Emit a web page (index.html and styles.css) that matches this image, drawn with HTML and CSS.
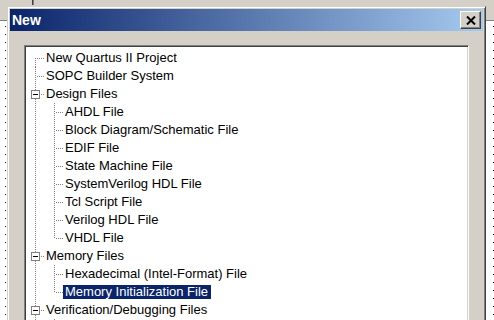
FILE: index.html
```html
<!DOCTYPE html>
<html lang="en">

<head>
    <meta charset="utf-8" />
    <title>New</title>
    <link rel="stylesheet" href="styles.css">
</head>

<body>
    <div class="desktop">
        <div class="topbar"><span class="edge"></span></div>

        <div class="dialog">
            <div class="titlebar">
                <span class="title">New</span>
                <button class="close">
                    <svg width="10" height="9" viewBox="0 0 10 9">
                        <path d="M1 0.5 L9 8.5 M9 0.5 L1 8.5" stroke="#000" stroke-width="2" fill="none" />
                    </svg>
                </button>
            </div>
            <div class="body">
                <div class="tree">
                    <div class="row"><i class="ln first"></i><span class="label">New Quartus II Project</span></div>
                    <div class="row"><i class="ln tee"></i><span class="label">SOPC Builder System</span></div>
                    <div class="row"><i class="ln tee"><b class="toggle"></b></i><span class="label">Design Files</span></div>
                    <div class="row"><i class="ln pipe"></i><i class="ln tee"></i><span class="label">AHDL File</span></div>
                    <div class="row"><i class="ln pipe"></i><i class="ln tee"></i><span class="label">Block Diagram/Schematic File</span></div>
                    <div class="row"><i class="ln pipe"></i><i class="ln tee"></i><span class="label">EDIF File</span></div>
                    <div class="row"><i class="ln pipe"></i><i class="ln tee"></i><span class="label">State Machine File</span></div>
                    <div class="row"><i class="ln pipe"></i><i class="ln tee"></i><span class="label">SystemVerilog HDL File</span></div>
                    <div class="row"><i class="ln pipe"></i><i class="ln tee"></i><span class="label">Tcl Script File</span></div>
                    <div class="row"><i class="ln pipe"></i><i class="ln tee"></i><span class="label">Verilog HDL File</span></div>
                    <div class="row"><i class="ln pipe"></i><i class="ln end"></i><span class="label">VHDL File</span></div>
                    <div class="row"><i class="ln tee"><b class="toggle"></b></i><span class="label">Memory Files</span></div>
                    <div class="row"><i class="ln pipe"></i><i class="ln tee"></i><span class="label">Hexadecimal (Intel-Format) File</span></div>
                    <div class="row"><i class="ln pipe"></i><i class="ln end"></i><span class="label selected">Memory Initialization File</span></div>
                    <div class="row"><i class="ln tee"><b class="toggle"></b></i><span class="label">Verification/Debugging Files</span></div>
                    <div class="row"><i class="ln pipe"></i><i class="ln tee"></i></div>
                </div>
            </div>
        </div>
    </div>
</body>

</html>
```

FILE: styles.css
```css
html,
body {
    margin: 0;
    height: 100%;
}

body {
    font-family: "Liberation Sans", Arial, sans-serif;
    font-size: 13px;
    color: #000;
}

/* desktop with the dotted grid */
.desktop {
    width: 494px;
    height: 320px;
    position: relative;
    overflow: hidden;
    background-color: #fff;
    background-image:
        linear-gradient(#fff 2px, transparent 2px, transparent 3px, #fff 3px),
        linear-gradient(90deg, transparent 5px, #000 5px, #000 6px, transparent 6px);
    background-size: 8px 8px;
}

.topbar {
    height: 20px;
    background: #d4d0c8;
    border-bottom: 1px solid #808080;
}

.edge {
    display: block;
    margin-left: 32px;
    width: 1px;
    height: 5px;
    background: #404040;
    border-right: 1px solid #808080;
}

/* the dialog window */
.dialog {
    position: absolute;
    left: 7px;
    top: 6px;
    width: 479px;
    height: 400px;
    box-sizing: border-box;
    background: #d4d0c8;
    border: 1px solid;
    border-color: #d4d0c8 #404040 #404040 #d4d0c8;
    box-shadow: inset 1px 1px #fff, inset -1px -1px #808080;
    padding: 2px;
}

.titlebar {
    height: 22px;
    display: flex;
    align-items: center;
    justify-content: space-between;
    padding: 0 2px;
    background: linear-gradient(90deg, #0a246a, #a6caf0);
}

.title {
    color: #fff;
    font-weight: bold;
    font-size: 14px;
}

.close {
    width: 21px;
    height: 18px;
    padding: 0;
    display: flex;
    align-items: center;
    justify-content: center;
    background: #d4d0c8;
    border: 1px solid;
    border-color: #fff #404040 #404040 #fff;
    box-shadow: inset -1px -1px #808080;
}

.close svg {
    display: block;
}

.body {
    padding: 14px 14px 0 14px;
}

/* tree view */
.tree {
    height: 300px;
    background: #fff;
    border: 1px solid;
    border-color: #808080 #fff #fff #808080;
    box-shadow: inset 1px 1px #404040, inset -1px -1px #d4d0c8;
    padding: 3px 0 0 1px;
}

.row {
    display: flex;
    align-items: center;
    height: 18px;
}

.ln {
    position: relative;
    flex: none;
    width: 19px;
    height: 18px;
}

.ln::before {
    content: "";
    position: absolute;
    left: 9px;
    top: 0;
    bottom: 0;
    width: 1px;
    background: repeating-linear-gradient(#808080 0 1px, transparent 1px 2px);
}

.ln::after {
    content: "";
    position: absolute;
    left: 10px;
    right: 0;
    top: 9px;
    height: 1px;
    background: repeating-linear-gradient(90deg, transparent 0 1px, #808080 1px 2px);
}

.first::before {
    top: 9px;
}

.end::before {
    bottom: 8px;
}

.pipe::after {
    display: none;
}

.toggle {
    position: absolute;
    left: 5px;
    top: 5px;
    width: 9px;
    height: 9px;
    box-sizing: border-box;
    border: 1px solid #808080;
    background: #fff;
    z-index: 1;
}

.toggle::before {
    content: "";
    position: absolute;
    left: 1px;
    top: 3px;
    width: 5px;
    height: 1px;
    background: #000;
}

.label {
    margin-left: -1px;
    padding: 0 3px 0 2px;
    line-height: 14px;
    white-space: nowrap;
}

.selected {
    background: #0a246a;
    color: #fff;
}
```
